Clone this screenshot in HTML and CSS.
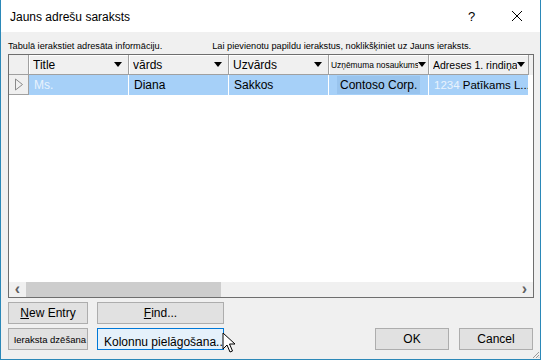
FILE: index.html
```html
<!DOCTYPE html>
<html lang="lv">
<head>
    <meta charset="UTF-8">
    <title>Jauns adrešu saraksts</title>
    <link rel="stylesheet" href="styles.css">
</head>
<body>
<div class="window">
    <div class="titlebar">
        <span class="title">Jauns adrešu saraksts</span>
        <span class="help">?</span>
        <svg class="close" width="12" height="12" viewBox="0 0 12 12">
            <path d="M1 1 L11 11 M11 1 L1 11" stroke="#000" stroke-width="1" fill="none"/>
        </svg>
    </div>

    <div class="content">
        <div class="hints">
            <span>Tabulā ierakstiet adresāta informāciju.</span>
            <span class="hint-right">Lai pievienotu papildu ierakstus, noklikšķiniet uz Jauns ieraksts.</span>
        </div>

        <div class="grid">
            <div class="grid-head">
                <div class="row-head"></div>
                <div class="col-head"><span>Title</span><i class="arrow"></i></div>
                <div class="col-head"><span>vārds</span><i class="arrow"></i></div>
                <div class="col-head"><span>Uzvārds</span><i class="arrow"></i></div>
                <div class="col-head small"><span>Uzņēmuma nosaukums</span><i class="arrow"></i></div>
                <div class="col-head narrow"><span>Adreses 1. rindiņa</span><i class="arrow"></i></div>
            </div>
            <div class="grid-row">
                <div class="row-head">
                    <svg width="10" height="13" viewBox="0 0 10 13">
                        <path d="M1.5 1 L8.5 6.5 L1.5 12 Z" fill="none" stroke="#8a8a8a"/>
                    </svg>
                </div>
                <div class="cell light">Ms.</div>
                <div class="cell">Diana</div>
                <div class="cell">Sakkos</div>
                <div class="cell"><span class="mark">Contoso Corp.</span></div>
                <div class="cell tight"><span class="faded">1234</span> Patīkams L...</div>
            </div>
            <div class="grid-empty"></div>
            <div class="hscroll">
                <span class="scroll-btn">&lsaquo;</span>
                <div class="track"><div class="thumb"></div></div>
                <span class="scroll-btn">&rsaquo;</span>
            </div>
        </div>

        <div class="buttons">
            <div class="left-buttons">
                <button><u>N</u>ew Entry</button>
                <button><u>F</u>ind...</button>
                <button class="small-text">Ieraksta dzēšana</button>
                <button class="focused">Kolonnu pielāgošana...</button>
            </div>
            <div class="right-buttons">
                <button>OK</button>
                <button>Cancel</button>
            </div>
        </div>
    </div>

    <svg class="cursor" width="14" height="22" viewBox="0 0 14 22">
        <path d="M1 1 L1 17 L5 13 L8 20 L10.5 19 L7.5 12 L13 12 Z" fill="#fff" stroke="#000" stroke-width="1" stroke-linejoin="round"/>
    </svg>
    <svg class="grip" width="8" height="8" viewBox="0 0 8 8">
        <path d="M7 1 L1 7 M7 4 L4 7 M7 6.5 L6.5 7" stroke="#9a9a9a" stroke-width="1"/>
    </svg>
</div>
</body>
</html>
```

FILE: styles.css
```css
body {
    margin: 0;
    font-family: "Liberation Sans", Arial, sans-serif;
    background: #fff;
}

.window {
    position: relative;
    width: 541px;
    height: 360px;
    box-sizing: border-box;
    border: 1px solid #2b88b8;
    border-top: none;
    background: #f0f0f0;
    display: flex;
    flex-direction: column;
    overflow: hidden;
}

.titlebar {
    height: 32px;
    background: #fff;
    display: flex;
    align-items: center;
    padding: 0 0 0 9px;
    flex-shrink: 0;
}

.title {
    font-size: 12px;
    color: #000;
    flex: 1;
    padding-top: 2px;
}

.help {
    font-size: 13px;
    width: 14px;
    margin-right: 29px;
}

.close {
    margin-right: 17px;
}

.content {
    flex: 1;
    padding: 7px 6px 0 7px;
    display: flex;
    flex-direction: column;
}

.hints {
    display: flex;
    font-size: 9.2px;
    color: #000;
    height: 15px;
    line-height: 15px;
    white-space: nowrap;
}

.hint-right {
    margin-left: 50px;
}

.grid {
    height: 244px;
    box-sizing: border-box;
    border: 1px solid #6e6e6e;
    background: #fff;
    display: flex;
    flex-direction: column;
}

.grid-head {
    display: flex;
    height: 20px;
    background: #f0f0f0;
    flex-shrink: 0;
}

.row-head {
    width: 20px;
    box-sizing: border-box;
    background: #f0f0f0;
    border-right: 1px solid #a0a0a0;
    border-bottom: 1px solid #a0a0a0;
    display: flex;
    align-items: center;
    justify-content: center;
    flex-shrink: 0;
}

.col-head {
    width: 100px;
    box-sizing: border-box;
    border-right: 1px solid #a0a0a0;
    border-bottom: 1px solid #a0a0a0;
    box-shadow: inset 1px 1px 0 #fff;
    display: flex;
    align-items: center;
    padding: 0 6px 0 4px;
    font-size: 12px;
    color: #000;
    flex-shrink: 0;
}

.col-head span {
    flex: 1;
    white-space: nowrap;
    overflow: hidden;
}

.col-head.small {
    font-size: 8.4px;
    padding-left: 2px;
    padding-right: 2px;
}

.col-head.narrow {
    font-size: 10.5px;
    padding-right: 3px;
}

.arrow {
    width: 0;
    height: 0;
    border-left: 4px solid transparent;
    border-right: 4px solid transparent;
    border-top: 5px solid #000;
    flex-shrink: 0;
}

.grid-row {
    display: flex;
    height: 20px;
    flex-shrink: 0;
}

.cell {
    width: 100px;
    box-sizing: border-box;
    background: #a6d0f8;
    border-right: 1px solid #fff;
    padding: 0 5px;
    font-size: 12px;
    line-height: 20px;
    color: #000;
    white-space: nowrap;
    overflow: hidden;
    flex-shrink: 0;
}

.cell.tight {
    padding: 0 2px 0 5px;
    font-size: 11.5px;
}

.cell.light,
.faded {
    color: #e9f3fd;
}

.mark {
    background: #99c4ee;
    padding: 2px 3px;
    margin-left: 3px;
}

.grid-empty {
    flex: 1;
}

.hscroll {
    height: 15px;
    display: flex;
    align-items: stretch;
    background: #f0f0f0;
    flex-shrink: 0;
}

.scroll-btn {
    width: 17px;
    text-align: center;
    font-size: 16px;
    font-weight: bold;
    line-height: 14px;
    color: #606060;
}

.track {
    flex: 1;
    display: flex;
}

.thumb {
    width: 195px;
    background: #cdcdcd;
}

.buttons {
    display: flex;
    align-items: flex-end;
    margin-top: 4px;
}

.left-buttons {
    display: grid;
    grid-template-columns: 80px 127px;
    gap: 4px 9px;
}

.right-buttons {
    display: flex;
    gap: 10px;
    margin-left: auto;
    margin-right: 1px;
}

button {
    height: 22px;
    box-sizing: border-box;
    background: #e1e1e1;
    border: 1px solid #adadad;
    font-family: "Liberation Sans", Arial, sans-serif;
    font-size: 12px;
    color: #000;
    padding: 0;
    margin: 0;
    white-space: nowrap;
    overflow: hidden;
}

.right-buttons button {
    width: 74px;
}

button.small-text {
    font-size: 9.5px;
    text-align: right;
    padding-right: 1px;
}

button.focused {
    background: #e5f1fb;
    border-color: #0078d7;
    text-align: left;
    padding: 6px 0 0 6px;
    font-size: 12px;
}

.cursor {
    position: absolute;
    left: 221px;
    top: 332px;
}

.grip {
    position: absolute;
    right: 0;
    bottom: 0;
}
```
